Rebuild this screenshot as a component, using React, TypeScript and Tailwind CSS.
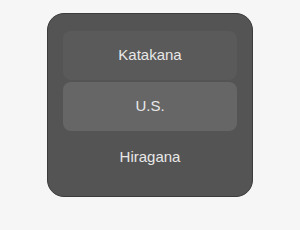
const items = ["Katakana", "U.S.", "Hiragana"];

export default function App() {
  const selected = 1;
  return (
    <div className="w-[300px] h-[230px] bg-[#f6f6f6] pt-[13px] pl-[47px]" style={{ fontFamily: '"Liberation Sans", Arial, sans-serif' }}>
      <div className="w-[206px] h-[184px] rounded-[17px] bg-[#545454] border border-[#3c3c3c] px-[15px] pt-[17px] flex flex-col gap-[2px]">
        {items.map((label, i) => (
          <div
            key={label}
            className={`h-[49px] rounded-[8px] flex items-center justify-center text-[15px] text-[#e8e8e8] ${
              i === selected ? "bg-[#666666]" : i === 0 ? "bg-[#5a5a5a]" : ""
            }`}
          >
            {label}
          </div>
        ))}
      </div>
    </div>
  );
}
